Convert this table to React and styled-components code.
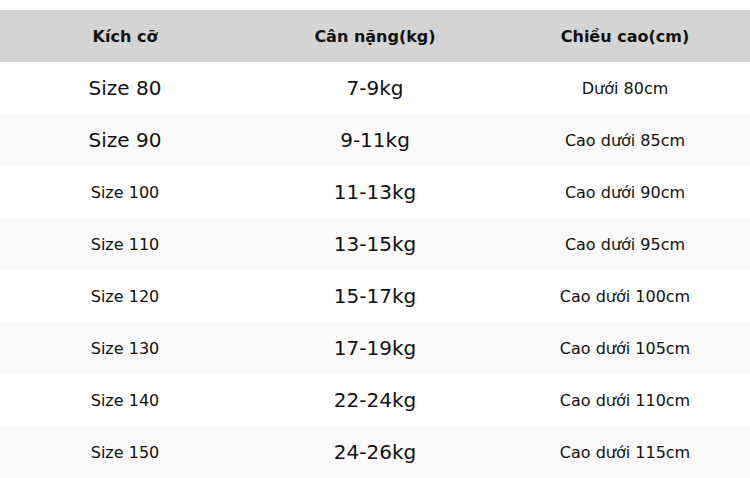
import React from 'react';
import styled, { createGlobalStyle } from 'styled-components';

const GlobalStyle = createGlobalStyle`
  html, body {
    margin: 0;
    padding: 0;
    background: #ffffff;
  }
  body {
    font-family: "DejaVu Sans", "Noto Sans", sans-serif;
  }
`;

const Page = styled.div`
  padding-top: 10px;
  width: 750px;
`;

const Table = styled.table`
  width: 750px;
  border-collapse: collapse;
  table-layout: fixed;
  color: #111;
`;

const HeadCell = styled.th`
  height: 52px;
  padding: 0;
  background: #d4d4d4;
  font-size: 16px;
  font-weight: bold;
  text-align: center;
  vertical-align: middle;
`;

const Row = styled.tr`
  background: ${p => (p.$odd ? '#f9f9f9' : '#ffffff')};
`;

const Cell = styled.td`
  height: 52px;
  padding: 0;
  text-align: center;
  vertical-align: middle;
  font-size: ${p => (p.$big ? '20px' : '16px')};
`;

const rows = [
  { size: 'Size 80', weight: '7-9kg', height: 'Dưới 80cm', bigSize: true },
  { size: 'Size 90', weight: '9-11kg', height: 'Cao dưới 85cm', bigSize: true },
  { size: 'Size 100', weight: '11-13kg', height: 'Cao dưới 90cm' },
  { size: 'Size 110', weight: '13-15kg', height: 'Cao dưới 95cm' },
  { size: 'Size 120', weight: '15-17kg', height: 'Cao dưới 100cm' },
  { size: 'Size 130', weight: '17-19kg', height: 'Cao dưới 105cm' },
  { size: 'Size 140', weight: '22-24kg', height: 'Cao dưới 110cm' },
  { size: 'Size 150', weight: '24-26kg', height: 'Cao dưới 115cm' }
];

const App = () => {
  return (
    <Page>
      <GlobalStyle />
      <Table>
        <thead>
          <tr>
            <HeadCell>Kích cỡ</HeadCell>
            <HeadCell>Cân nặng(kg)</HeadCell>
            <HeadCell>Chiều cao(cm)</HeadCell>
          </tr>
        </thead>
        <tbody>
          {rows.map((row, index) => (
            <Row key={index} $odd={index % 2 === 1}>
              <Cell $big={row.bigSize}>{row.size}</Cell>
              <Cell $big>{row.weight}</Cell>
              <Cell>{row.height}</Cell>
            </Row>
          ))}
        </tbody>
      </Table>
    </Page>
  );
};

export default App;
